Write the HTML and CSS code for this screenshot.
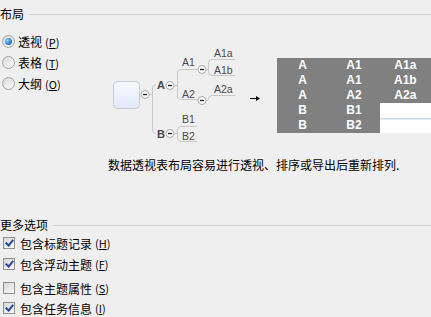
FILE: index.html
```html
<!DOCTYPE html>
<html lang="zh-CN">
<head>
    <meta charset="UTF-8">
    <title>导出布局</title>
    <link rel="stylesheet" href="styles.css">
</head>
<body>
    <div class="group-title layout-title"><span>布局</span></div>

    <div class="layout">
        <div class="radios">
            <label class="option"><span class="radio checked"></span>透视<span class="key">(<u>P</u>)</span></label>
            <label class="option"><span class="radio"></span>表格<span class="key">(<u>T</u>)</span></label>
            <label class="option"><span class="radio"></span>大纲<span class="key">(<u>O</u>)</span></label>
        </div>

        <div class="preview">
            <div class="preview-row">
                <svg class="tree" viewBox="108 44 160 102" width="160" height="102">
                    <defs>
                        <linearGradient id="rootFill" x1="0" y1="0" x2="0" y2="1">
                            <stop offset="0" stop-color="#f6f9fe"/>
                            <stop offset="1" stop-color="#e1e9f8"/>
                        </linearGradient>
                    </defs>
                    <!-- connectors -->
                    <g fill="none" stroke="#c8c8c8" stroke-width="1">
                        <path d="M149 94.5H152.5"/>
                        <path d="M156 84.5Q152.5 84.5 152.5 88V130Q152.5 133.5 156 133.5"/>
                        <path d="M174 85.5H177.5"/>
                        <path d="M198 69.5H181Q177.5 69.5 177.5 73V96Q177.5 99.5 181 99.5H198"/>
                        <path d="M174 133.5H177.5"/>
                        <path d="M197 126.5H181Q177.5 126.5 177.5 130V138Q177.5 141.5 181 141.5H197"/>
                        <path d="M206 69.5H208.5"/>
                        <path d="M235 59.5H212Q208.5 59.5 208.5 63V72Q208.5 75.5 212 75.5H235"/>
                        <path d="M206 100.5Q208.5 100.5 208.5 98.5Q208.5 95.5 212 95.5H235"/>
                    </g>
                    <rect x="113.5" y="81.5" width="26" height="27" rx="4" fill="url(#rootFill)" stroke="#c6cad3"/>
                    <!-- collapse buttons -->
                    <g class="toggle">
                        <circle cx="145" cy="94.5" r="4"/><path d="M143 94.5H147"/>
                        <circle cx="170" cy="85.5" r="4"/><path d="M168 85.5H172"/>
                        <circle cx="202" cy="69.5" r="4"/><path d="M200 69.5H204"/>
                        <circle cx="202" cy="100.5" r="4"/><path d="M200 100.5H204"/>
                        <circle cx="170" cy="133.5" r="4"/><path d="M168 133.5H172"/>
                    </g>
                    <g class="node">
                        <text class="main" x="157" y="88.5">A</text>
                        <text x="182" y="66">A1</text>
                        <text x="182" y="97.5">A2</text>
                        <text x="214" y="57">A1a</text>
                        <text x="214" y="73.5">A1b</text>
                        <text x="214" y="93">A2a</text>
                        <text class="main" x="157" y="137.5">B</text>
                        <text x="182" y="123">B1</text>
                        <text x="182" y="139.5">B2</text>
                    </g>
                    <path d="M250 98.5H258" stroke="#000" stroke-width="1"/>
                    <path d="M256 96L260 98.5L256 101Z" fill="#000"/>
                </svg>

                <table class="pivot">
                    <tr><td>A</td><td>A1</td><td>A1a</td></tr>
                    <tr><td>A</td><td>A1</td><td>A1b</td></tr>
                    <tr><td>A</td><td>A2</td><td>A2a</td></tr>
                    <tr><td>B</td><td>B1</td><td class="blank"></td></tr>
                    <tr><td>B</td><td>B2</td><td class="blank blank-last"></td></tr>
                </table>
            </div>

            <p class="desc">数据透视表布局容易进行透视、排序或导出后重新排列.</p>
        </div>
    </div>

    <div class="group-title more-title"><span>更多选项</span></div>

    <div class="checks">
        <label class="option check-row"><span class="check on"></span>包含标题记录<span class="key">(<u>H</u>)</span></label>
        <label class="option check-row second"><span class="check on"></span>包含浮动主题<span class="key">(<u>F</u>)</span></label>
        <label class="option check-row third"><span class="check"></span>包含主题属性<span class="key">(<u>S</u>)</span></label>
        <label class="option check-row"><span class="check on"></span>包含任务信息<span class="key">(<u>I</u>)</span></label>
    </div>
</body>
</html>
```

FILE: styles.css
```css
body {
    margin: 0;
    width: 431px;
    height: 317px;
    overflow: hidden;
    background: #efefef;
    color: #000;
    font: 12px "Noto Sans CJK SC", sans-serif;
}
.group-title {
    display: flex;
    align-items: center;
    height: 16px;
    line-height: 16px;
}
.group-title::after {
    content: "";
    flex: 1;
    border-top: 1px solid #d2d2d2;
    margin-left: 5px;
}
.layout-title {
    padding-top: 6px;
}
.layout {
    display: flex;
}
.radios {
    width: 108px;
    padding-top: 9px;
    display: flex;
    flex-direction: column;
}
.option {
    display: flex;
    align-items: center;
    height: 21px;
    padding-left: 2px;
}
.key {
    margin-left: 3px;
    font-size: 11px;
}
.radio {
    position: relative;
    box-sizing: border-box;
    width: 13px;
    height: 13px;
    margin-right: 3px;
    border: 1px solid #a4a4a4;
    border-radius: 50%;
    background: linear-gradient(135deg, #d8d8d8, #fbfbfb);
}
.radio.checked::after {
    content: "";
    position: absolute;
    left: 2px;
    top: 2px;
    width: 7px;
    height: 7px;
    border-radius: 50%;
    background: radial-gradient(circle at 35% 35%, #9fd4f7 0, #3d8fd3 45%, #134c8c 100%);
}
.preview {
    padding-top: 22px;
}
.preview-row {
    display: flex;
    align-items: flex-start;
}
.tree {
    display: block;
}
.toggle circle {
    fill: #fff;
    stroke: #a9a9a9;
    stroke-width: 1;
}
.toggle path {
    stroke: #222;
    stroke-width: 1.4;
}
.node text {
    font: 10.5px "Liberation Sans", sans-serif;
    fill: #4a4a4a;
}
.node text.main {
    font-weight: bold;
    font-size: 11px;
}
.pivot {
    margin: 14px 0 0 9px;
    width: 154px;
    border-collapse: collapse;
    background: #808080;
    color: #fff;
    font: bold 12px "Liberation Sans", sans-serif;
}
.pivot td {
    width: 51px;
    height: 15px;
    padding: 0;
    line-height: 15px;
    text-align: center;
}
.pivot .blank {
    background: #fff;
}
.pivot .blank-last {
    box-shadow: inset 0 1px 0 #cdd6e2, inset 0 2px 0 #e8edf3;
}
.desc {
    margin: 11px 0 0;
    line-height: 16px;
}
.more-title {
    margin-top: 44px;
}
.check-row {
    height: 20px;
}
.check-row.second {
    margin-top: 1px;
}
.check-row.third {
    margin-top: 4px;
}
.check {
    position: relative;
    box-sizing: border-box;
    width: 12px;
    height: 12px;
    margin: 0 5px 0 1px;
    border: 1px solid #8f9092;
    background: linear-gradient(135deg, #d6d6d6, #fafafa);
}
.check.on::after {
    content: "";
    position: absolute;
    left: 3px;
    top: 0;
    width: 3px;
    height: 6px;
    border: solid #2346a0;
    border-width: 0 2px 2px 0;
    transform: rotate(40deg);
}
```
